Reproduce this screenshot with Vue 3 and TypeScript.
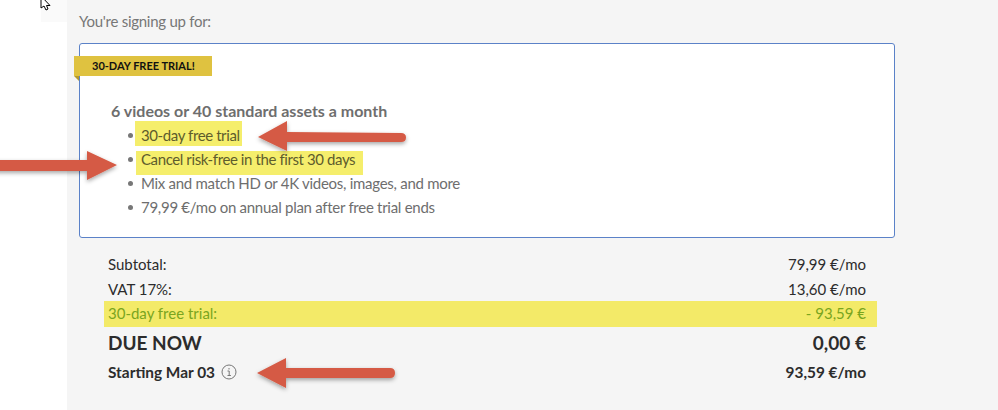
<template>
  <div class="page">
    <div class="gutter">
      <div class="cursor-patch">
        <svg class="cursor" width="14" height="11" viewBox="0 0 14 11">
          <path d="M1 -4 L1 8 L4 6 L6 10 L8 9 L6.500 5.500 L10 5.500 Z" fill="#fff" stroke="#000" stroke-width="1" />
        </svg>
      </div>
    </div>
    <main class="panel">
      <p class="lead">You're signing up for:</p>
      <section class="plan">
        <div class="ribbon">30-DAY FREE TRIAL!</div>
        <h2>6 videos or 40 standard assets a month</h2>
        <ul>
          <li v-for="item in features" :key="item.text">
            <span :class="item.mark">{{ item.text }}</span>
          </li>
        </ul>
      </section>
      <div class="summary">
        <div class="row"><span>Subtotal:</span><span>79,99 €/mo</span></div>
        <div class="row"><span>VAT 17%:</span><span>13,60 €/mo</span></div>
        <div class="row trial"><span>30-day free trial:</span><span>- 93,59 €</span></div>
        <div class="row due"><span>DUE NOW</span><span>0,00 €</span></div>
        <div class="row starting">
          <span class="start-label">
            Starting Mar 03
            <svg width="16" height="16" viewBox="0 0 16 16" fill="none" stroke="#777">
              <circle cx="8" cy="8" r="7" />
              <path d="M6.500 7h1.700v4.500M6.500 11.500h3.400M8 4v1.500" />
            </svg>
          </span>
          <span>93,59 €/mo</span>
        </div>
      </div>
    </main>
    <svg class="arrows" width="998" height="410" viewBox="0 0 998 410">
      <defs>
        <filter id="shadow" x="-10%" y="-30%" width="120%" height="170%">
          <feDropShadow dx="0" dy="2" stdDeviation="2" flood-color="#000" flood-opacity="0.35" />
        </filter>
      </defs>
      <g fill="#d55a44" filter="url(#shadow)">
        <path d="M258 137 L287 121 L287 132 L401 133 Q406 133 406 137.500 Q406 142 401 142 L287 142 L287 151 Z" />
        <path d="M-5 160 L87 160 L87 151 L117 165 L87 180 L87 171 L-5 171 Z" />
        <path d="M257 373 L286 358 L286 368 L390 368 Q395 368 395 373 Q395 378 390 378 L286 378 L286 388 Z" />
      </g>
    </svg>
  </div>
</template>

<script setup lang="ts">
interface Feature {
  text: string;
  mark?: string;
}

const features: Feature[] = [
  { text: '30-day free trial', mark: 'mark first' },
  { text: 'Cancel risk-free in the first 30 days', mark: 'mark second' },
  { text: 'Mix and match HD or 4K videos, images, and more' },
  { text: '79,99 €/mo on annual plan after free trial ends' },
];
</script>

<style>
html, body { margin: 0; background: #fff; overflow: hidden; }
</style>

<style scoped>
.page {
  position: relative;
  display: flex;
  width: 998px;
  height: 410px;
  font-family: Lato, "Liberation Sans", sans-serif;
  overflow: hidden;
}

.gutter {
  width: 67px;
  flex: none;
  background: #fff;
}

.cursor-patch {
  position: absolute;
  left: 41px;
  top: 0;
  width: 26px;
  height: 22px;
  background: #fafafa;
}

.cursor {
  position: absolute;
  left: -1px;
  top: 0;
}

.panel {
  flex: 1;
  background: #f5f5f5;
  padding: 11px 103px 0 12px;
}

.lead {
  margin: 0 0 12px;
  font-size: 15px;
  letter-spacing: -0.27px;
  line-height: 20px;
  color: #777;
}

.plan {
  position: relative;
  box-sizing: border-box;
  height: 195px;
  background: #fff;
  border: 1px solid #5b82c8;
  border-radius: 3px;
  padding: 55px 0 0 31px;
}

.ribbon {
  position: absolute;
  left: -6px;
  top: 12px;
  width: 138px;
  height: 20px;
  box-sizing: border-box;
  padding-left: 18px;
  background: #dfc240;
  color: #111;
  font-size: 11px;
  font-weight: 700;
  line-height: 20px;
  white-space: nowrap;
}

.ribbon::after {
  content: "";
  position: absolute;
  left: 0;
  top: 20px;
  border-top: 5px solid #b59a2c;
  border-left: 5px solid transparent;
}

h2 {
  margin: 0;
  height: 24px;
  font-size: 16px;
  font-weight: 700;
  line-height: 24px;
  color: #6e6e6e;
}

ul {
  margin: 0;
  padding: 0 0 0 30px;
  list-style: none;
}

li {
  position: relative;
  height: 24px;
  font-size: 15px;
  letter-spacing: -0.28px;
  line-height: 24px;
  color: #6e6e6e;
}

li::before {
  content: "";
  position: absolute;
  left: -13px;
  top: 10px;
  width: 5px;
  height: 5px;
  border-radius: 50%;
  background: #777;
}

/* the marker strokes were drawn by hand, they don't follow the line boxes */
.mark {
  position: relative;
  display: inline-block;
  z-index: 0;
  letter-spacing: -0.4px;
  color: #5e5c2c;
}

.mark::before {
  content: "";
  position: absolute;
  z-index: -1;
  background: #f5ee6c;
}

.first::before {
  inset: -2px -2px 1px -6px;
}

.second::before {
  inset: 4px -8px -4px -5px;
}

.summary {
  margin: 13px 18px 0 29px;
}

.row {
  display: flex;
  justify-content: space-between;
  height: 25px;
  padding: 0 11px 0 4px;
  margin-left: -4px;
  font-size: 15px;
  line-height: 27px;
  color: #2c2c2c;
}

.trial {
  background: #f3ea68;
  color: #7aa51f;
  height: 26px;
  line-height: 24px;
}

.due {
  height: 34px;
  font-size: 19px;
  font-weight: 700;
  line-height: 32px;
}

.starting {
  height: 22px;
  font-size: 15.400px;
  font-weight: 700;
  line-height: 22px;
}

.start-label {
  display: flex;
  align-items: center;
  gap: 6px;
}

.arrows {
  position: absolute;
  left: 0;
  top: 0;
  pointer-events: none;
}
</style>
